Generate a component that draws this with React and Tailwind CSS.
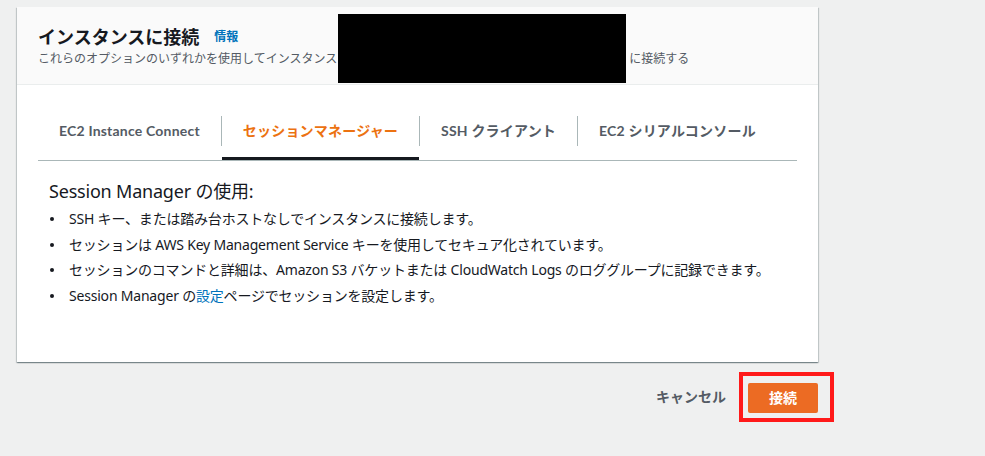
import React from "react";

const font = { fontFamily: '"Noto Sans", "Noto Sans CJK JP", sans-serif' };
const tabFont = { fontFamily: 'Lato, "Noto Sans CJK JP", sans-serif' };

function Tab({ label, active }) {
  return (
    <div className="flex flex-col px-[21px]">
      <div
        style={tabFont}
        className={
          "pt-[21px] pb-[16px] text-[14px] leading-[20px] font-bold whitespace-nowrap tracking-[0.2px] " +
          (active ? "text-[#ec7211]" : "text-[#545b64]")
        }
      >
        {label}
      </div>
      <div className={"h-[3px] -mx-[21px] " + (active ? "bg-[#16191f]" : "bg-transparent")} />
    </div>
  );
}

function Divider() {
  return <div className="w-px h-[30px] mt-[16px] bg-[#aab7b8]" />;
}

function Bullet({ children }) {
  return (
    <li className="flex items-center text-[14px] leading-[25.7px] text-[#16191f]">
      <span className="ml-[1px] mr-[15px] w-[4px] h-[4px] rounded-full bg-[#16191f]" />
      <span className="tracking-[-0.2px]">{children}</span>
    </li>
  );
}

export default function App() {
  return (
    <div className="w-[985px] h-[456px] bg-[#eff0f0] overflow-hidden pt-[7px] pl-[17px]" style={font}>
      <div className="relative w-[801px] bg-white shadow-[0_1px_1px_0_rgba(0,28,36,0.3),1px_1px_1px_0_rgba(0,28,36,0.15),-1px_1px_1px_0_rgba(0,28,36,0.15)]">
        {/* header */}
        <div className="bg-[#fafafa] border-b border-[#eaeded] pl-[21px] pt-[18px] pb-[17px]">
          <div className="flex items-center">
            <span className="text-[18px] leading-[24px] font-bold text-[#16191f]">インスタンスに接続</span>
            <span className="ml-[15px] text-[12px] leading-[24px] font-bold text-[#0073bb]">情報</span>
          </div>
          <div className="mt-[2px] text-[12px] leading-[16px] text-[#545b64] whitespace-nowrap">
            これらのオプションのいずれかを使用してインスタンス
            <span className="inline-block w-[292px]" />
            に接続する
          </div>
        </div>
        <div className="absolute left-[321px] top-[7px] w-[288px] h-[69px] bg-black" />

        {/* tabs */}
        <div className="px-[21px] pt-[15px]">
          <div className="flex border-b border-[#aab7b8]">
            <Tab label="EC2 Instance Connect" />
            <Divider />
            <Tab label="セッションマネージャー" active />
            <Divider />
            <Tab label="SSH クライアント" />
            <Divider />
            <Tab label="EC2 シリアルコンソール" />
          </div>

          {/* content */}
          <div className="pl-[11px] pt-[18px] pb-[53px]">
            <div className="text-[18px] leading-[24px] text-[#16191f] tracking-[-0.2px]">Session Manager の使用:</div>
            <ul className="mt-[3px]">
              <Bullet>SSH キー、または踏み台ホストなしでインスタンスに接続します。</Bullet>
              <Bullet>セッションは AWS Key Management Service キーを使用してセキュア化されています。</Bullet>
              <Bullet>セッションのコマンドと詳細は、Amazon S3 バケットまたは CloudWatch Logs のロググループに記録できます。</Bullet>
              <Bullet>
                Session Manager の<span className="text-[#0073bb]">設定</span>ページでセッションを設定します。
              </Bullet>
            </ul>
          </div>
        </div>
      </div>

      {/* footer */}
      <div className="w-[817px] mt-[10px] flex justify-end items-center">
        <span className="text-[14px] leading-[20px] font-bold text-[#545b64]">キャンセル</span>
        <div className="ml-[13px] border-4 border-[#ff1a1a] pl-[5px] pr-[12px] pt-[7px] pb-[5px]">
          <div className="w-[70px] h-[30px] rounded-[2px] bg-[#ec6b23] flex items-center justify-center text-[14px] font-bold text-white">
            接続
          </div>
        </div>
      </div>
    </div>
  );
}
